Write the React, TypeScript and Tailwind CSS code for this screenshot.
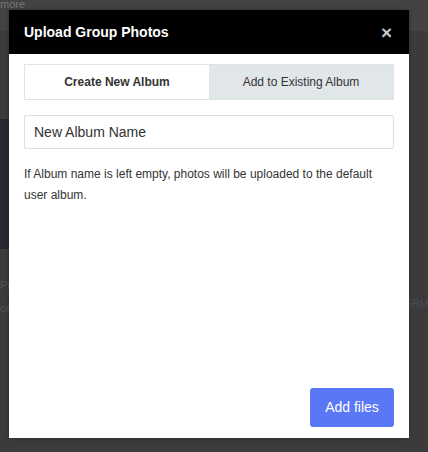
export default function App() {
  return (
    <div className="relative h-[452px] w-[428px] overflow-hidden bg-[#3b3b3b] font-[family-name:Liberation_Sans,Arial,sans-serif]">
      {/* page behind the overlay */}
      <div className="h-[31px] bg-[#434343] text-[11px] leading-[8px] text-[#777]">more</div>
      <div className="mt-[88px] h-[130px] w-[20px] bg-[#26282d]" />
      <div className="mt-[28px] flex items-start justify-between text-[11px] text-[#555]">
        <div className="flex flex-col gap-[6px]">
          <span>Pr</span>
          <span>ce</span>
        </div>
        <span className="mt-[18px] text-[#4a4d5c]">GRU</span>
      </div>

      {/* modal */}
      <div className="absolute left-[9px] top-[10px] flex h-[428px] w-[400px] flex-col bg-white shadow-[0_0_4px_rgba(0,0,0,0.3)]">
        <div className="flex h-[44px] shrink-0 items-center justify-between bg-black px-[15px]">
          <h2 className="text-[14px] font-bold text-white">Upload Group Photos</h2>
          <button className="mr-[2px] text-[19px] font-bold leading-none text-[#c8c8c8]">×</button>
        </div>

        <div className="flex flex-1 flex-col px-[15px] pt-[10px] pb-[11px]">
          <div className="flex h-[36px] border border-[#dfe3e6] text-[12px]">
            <div className="flex flex-1 items-center justify-center bg-white font-bold text-[#333]">
              Create New Album
            </div>
            <div className="flex flex-1 items-center justify-center bg-[#e1e6e9] text-[#333]">
              Add to Existing Album
            </div>
          </div>

          <div className="mt-[15px] flex h-[34px] items-center rounded-[2px] border border-[#dedede] px-[9px] text-[14px] text-[#333]">
            New Album Name
          </div>

          <p className="mt-[15px] text-[12px] leading-[21px] text-[#333]">
            If Album name is left empty, photos will be uploaded to the default user album.
          </p>

          <div className="mt-auto flex justify-end">
            <button className="h-[39px] w-[84px] rounded-[3px] bg-[#5a78f5] text-[14px] text-white">
              Add files
            </button>
          </div>
        </div>
      </div>
    </div>
  );
}
